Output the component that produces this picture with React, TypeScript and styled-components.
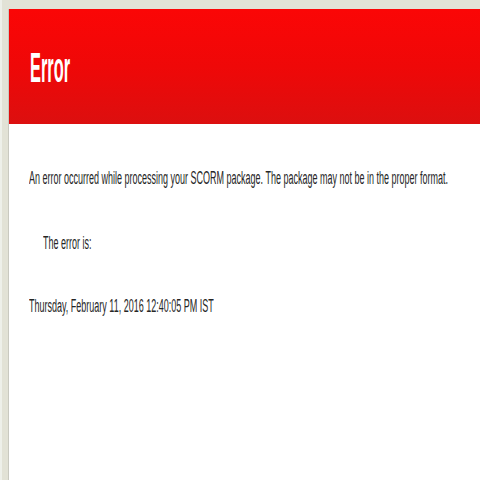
import React from "react";
import styled, { createGlobalStyle } from "styled-components";

const Global = createGlobalStyle`
  html, body { margin: 0; padding: 0; }
  body {
    background: #e6e8df;
    font-family: "Liberation Sans", Arial, sans-serif;
    overflow: hidden;
  }
`;

const Page = styled.div`
  height: 480px;
  padding: 9px 0 0 8px;
  box-sizing: border-box;
  background: linear-gradient(90deg, #eef0ea 0 2px, #e2e2d6 2px 8px);
`;

const Panel = styled.div`
  height: 100%;
  background: #ffffff;
  border-left: 1px solid #c9c9c0;
  display: flex;
  flex-direction: column;
  overflow: hidden;
`;

const Header = styled.header`
  height: 115px;
  flex: none;
  box-sizing: border-box;
  padding: 38px 0 0 21px;
  background: linear-gradient(180deg, #fb0606 0%, #ef0808 50%, #dc0f0f 100%);
`;

const Title = styled.h1`
  margin: 0;
  font-size: 42px;
  line-height: 42px;
  font-weight: 700;
  color: #ffffff;
  white-space: nowrap;
  transform: scaleX(0.39);
  transform-origin: left center;
`;

const Body = styled.div`
  display: flex;
  flex-direction: column;
  padding: 44px 0 0 20px;
`;

const Line = styled.p<{ $indent?: number; $gap?: number }>`
  margin: ${(p) => p.$gap ?? 0}px 0 0 ${(p) => p.$indent ?? 0}px;
  font-size: 18px;
  line-height: 20px;
  color: #262626;
  white-space: nowrap;
  transform: scaleX(0.5);
  transform-origin: left center;
`;

export default function App() {
  return (
    <>
      <Global />
      <Page>
        <Panel>
          <Header>
            <Title>Error</Title>
          </Header>
          <Body>
            <Line>
              An error occurred while processing your SCORM package. The package may not be in the proper format.
            </Line>
            <Line $indent={14} $gap={45}>The error is:</Line>
            <Line $gap={43}>Thursday, February 11, 2016 12:40:05 PM IST</Line>
          </Body>
        </Panel>
      </Page>
    </>
  );
}
